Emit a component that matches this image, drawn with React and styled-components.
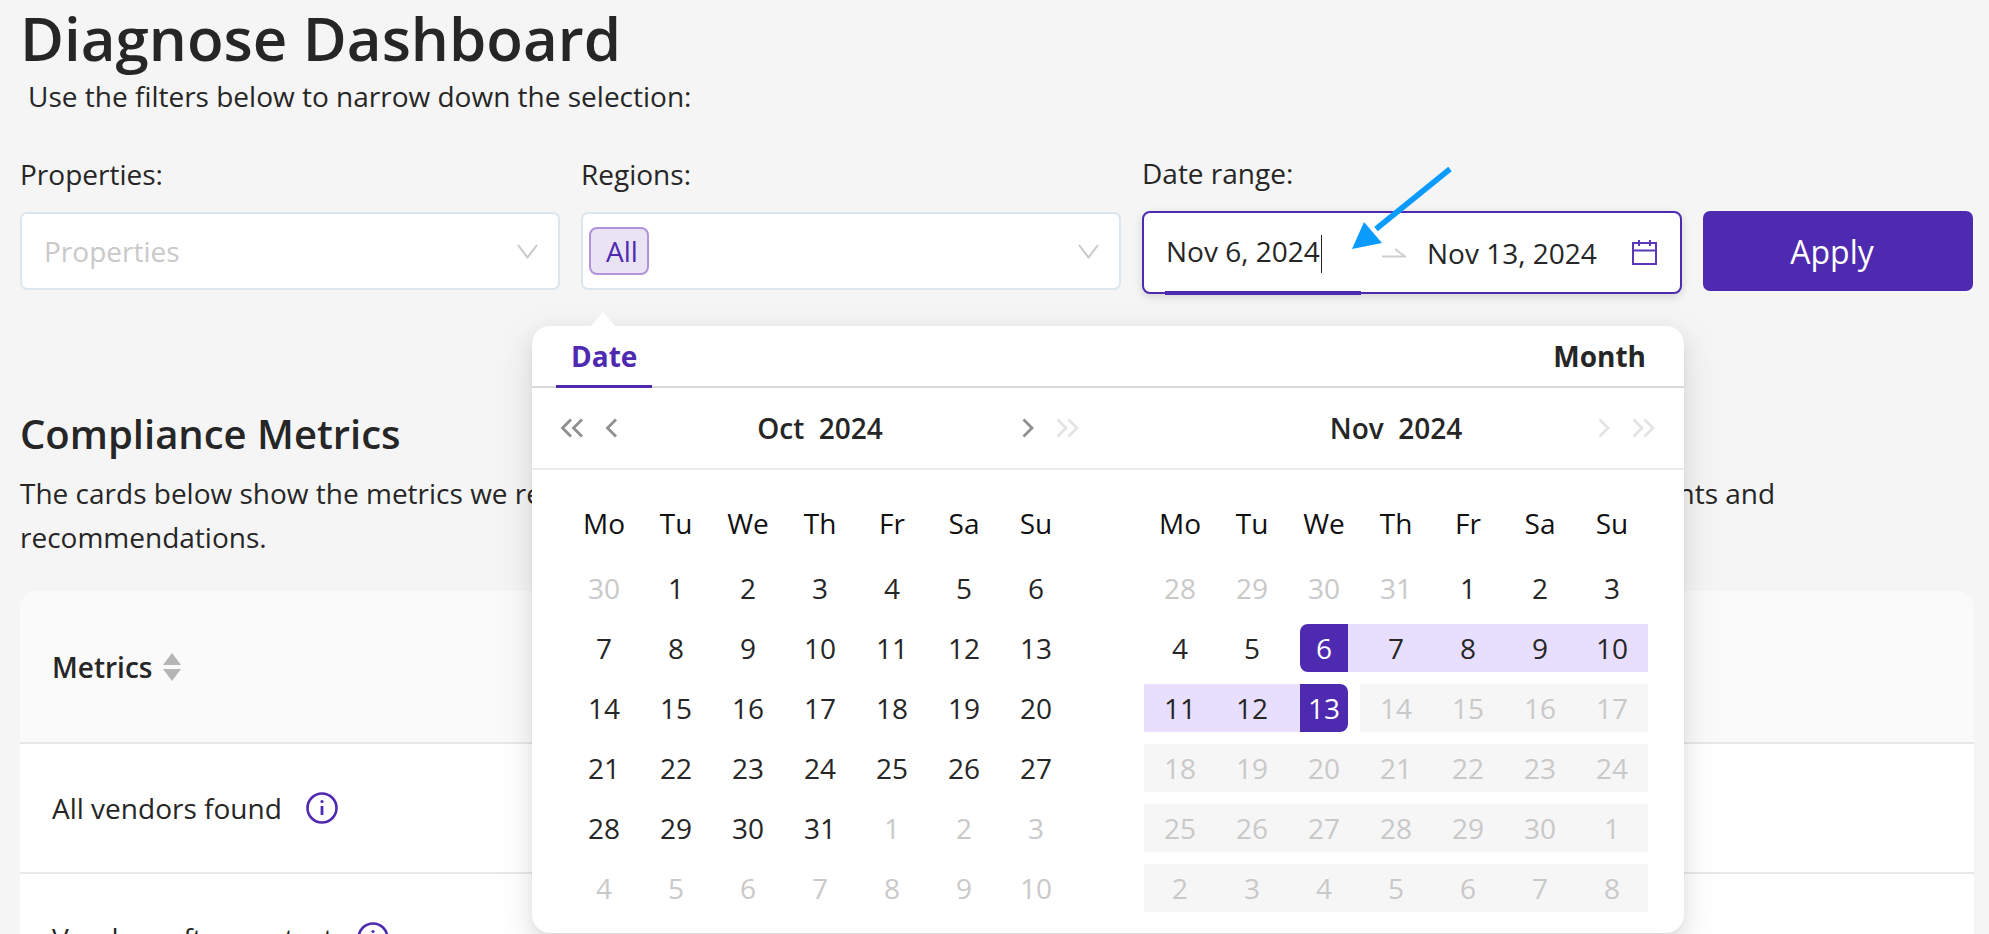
import React from 'react'
import styled, { createGlobalStyle } from 'styled-components'

const purple = '#4e2ab1'
const ink = '#262626'
const muted = '#c9c9c9'

const GlobalStyle = createGlobalStyle`
  html, body {
    margin: 0;
    height: 100%;
    overflow: hidden;
    background: #f5f5f5;
  }
  body {
    font-family: "Open Sans", "Noto Sans", sans-serif;
    color: ${ink};
  }
`

const Page = styled.div`
  position: relative;
  height: 934px;
  overflow: hidden;
  padding: 0 15px 0 20px;
  box-sizing: border-box;
`
const Title = styled.h1`
  margin: 0;
  font-size: 60px;
  line-height: 76px;
  font-weight: 600;
`
const Subtitle = styled.p`
  margin: 0 0 0 8px;
  font-size: 28px;
  line-height: 40px;
`
const Filters = styled.div`
  display: grid;
  grid-template-columns: 540px 540px 540px 270px;
  column-gap: 21px;
  margin-top: 39px;
  align-items: end;
`
const Field = styled.div`
  position: relative;
  display: flex;
  flex-direction: column;
`
const Label = styled.label`
  font-size: 28px;
  line-height: 36px;
  margin-bottom: 20px;
`
const SelectBox = styled.div`
  height: 78px;
  box-sizing: border-box;
  display: flex;
  align-items: center;
  justify-content: space-between;
  padding: 0 20px 0 6px;
  background: #fff;
  border: 2px solid #dbe6ee;
  border-radius: 7px;
  margin-bottom: 4px;
`
const Placeholder = styled.span`
  margin-left: 16px;
  font-size: 28px;
  color: ${muted};
`
const Tag = styled.span`
  height: 48px;
  width: 60px;
  box-sizing: border-box;
  display: flex;
  align-items: center;
  justify-content: center;
  padding-left: 6px;
  background: #e9e3f3;
  border: 2px solid #b093dc;
  border-radius: 8px;
  color: ${purple};
  font-size: 28px;
`
const DateBox = styled.div`
  position: relative;
  height: 83px;
  box-sizing: border-box;
  display: flex;
  align-items: center;
  padding: 0 23px 0 22px;
  background: #fff;
  border: 2.5px solid ${purple};
  border-radius: 8px;
  box-shadow: 0 3px 10px rgba(0, 0, 0, 0.14);
  font-size: 28px;
`
const DateValue = styled.span`
  width: ${p => p.$width}px;
  margin-left: ${p => p.$gap || 0}px;
  white-space: nowrap;
`
const Caret = styled.span`
  display: inline-block;
  width: 1.5px;
  height: 38px;
  margin-left: 1px;
  background: #222;
  vertical-align: middle;
`
const ActiveBar = styled.span`
  position: absolute;
  left: 21px;
  bottom: -2.5px;
  width: 196px;
  height: 4px;
  background: ${purple};
`
const ArrowMark = styled.svg`
  position: absolute;
  left: 202px;
  top: -51px;
  z-index: 5;
`
const ApplyButton = styled.button`
  height: 80px;
  margin-bottom: 3px;
  padding: 0 12px 0 0;
  border: 0;
  border-radius: 7px;
  background: ${purple};
  color: #fff;
  font-family: inherit;
  font-size: 32px;
`
const SectionTitle = styled.h2`
  margin: 114px 0 0;
  font-size: 40px;
  line-height: 52px;
  font-weight: 600;
`
const Intro = styled.p`
  margin: 11px 0 0;
  font-size: 28px;
  line-height: 44px;
  width: 1790px;
`
const TableCard = styled.div`
  margin-top: 32px;
  background: #fff;
  border-radius: 18px 18px 0 0;
  overflow: hidden;
`
const TableHead = styled.div`
  height: 153px;
  box-sizing: border-box;
  display: flex;
  align-items: center;
  gap: 11px;
  padding-left: 32px;
  background: #fafafa;
  font-size: 28px;
  font-weight: 600;
  border-bottom: 2px solid #e8e8e8;
`
const TableRow = styled.div`
  height: 130px;
  box-sizing: border-box;
  display: flex;
  align-items: center;
  gap: 24px;
  padding-left: 32px;
  font-size: 28px;
  border-bottom: 2px solid #e8e8e8;
`
const Popup = styled.div`
  position: absolute;
  left: 532px;
  top: 326px;
  z-index: 3;
  width: 1152px;
  height: 607px;
  background: #fff;
  border-radius: 18px;
  box-shadow: 0 8px 20px rgba(0, 0, 0, 0.08), 0 4px 8px -5px rgba(0, 0, 0, 0.12), 0 11px 36px 10px rgba(0, 0, 0, 0.05);
  &::before {
    content: '';
    position: absolute;
    left: 59px;
    top: -14px;
    border: 12px solid transparent;
    border-top: 0;
    border-bottom: 14px solid #fff;
  }
`
const Tabs = styled.div`
  height: 62px;
  box-sizing: border-box;
  display: flex;
  align-items: stretch;
  justify-content: space-between;
  padding: 0 38px 0 24px;
  border-bottom: 2px solid #d9d9d9;
`
const Tab = styled.div`
  position: relative;
  padding: 0 ${p => (p.$active ? 15 : 0)}px;
  display: flex;
  align-items: center;
  font-size: 28px;
  font-weight: 700;
  color: ${p => (p.$active ? purple : ink)};
  ${p => p.$active && `
    &::after {
      content: '';
      position: absolute;
      left: 0;
      right: 0;
      bottom: -2px;
      height: 3px;
      background: ${purple};
    }
  `}
`
const HeaderRow = styled.div`
  height: 82px;
  box-sizing: border-box;
  display: grid;
  grid-template-columns: 504px 504px;
  column-gap: 72px;
  padding: 0 36px;
  border-bottom: 2px solid #ececec;
`
const MonthHeader = styled.div`
  display: flex;
  align-items: center;
  justify-content: space-between;
  margin: 0 -8px;
`
const NavGroup = styled.div`
  display: flex;
  align-items: center;
  gap: 21px;
  visibility: ${p => (p.$hidden ? 'hidden' : 'visible')};
`
const MonthTitle = styled.div`
  font-size: 28px;
  font-weight: 600;
  white-space: pre;
`
const Calendars = styled.div`
  display: grid;
  grid-template-columns: 504px 504px;
  column-gap: 72px;
  padding: 29px 36px 0;
`
const Weekdays = styled.div`
  display: grid;
  grid-template-columns: repeat(7, 72px);
  height: 48px;
  margin-bottom: 17px;
`
const Weekday = styled.div`
  display: flex;
  align-items: center;
  justify-content: center;
  font-size: 28px;
  color: #111;
`
const DayGrid = styled.div`
  display: grid;
  grid-template-columns: repeat(7, 72px);
  grid-auto-rows: 48px;
  row-gap: 12px;
`
const dayBackground = {
  range: '#e7dffd',
  start: 'linear-gradient(to right, transparent 60px, #e7dffd 60px)',
  end: 'linear-gradient(to right, #e7dffd 12px, transparent 12px)',
  off: '#f6f6f6'
}
const Day = styled.div`
  display: flex;
  justify-content: center;
  background: ${p => dayBackground[p.$kind] || 'transparent'};
`
const DayNumber = styled.span`
  width: 48px;
  display: flex;
  align-items: center;
  justify-content: center;
  font-size: 28px;
  color: ${p => (p.$kind === 'start' || p.$kind === 'end' ? '#fff' : p.$kind === 'off' || p.$kind === 'out' ? muted : ink)};
  background: ${p => (p.$kind === 'start' || p.$kind === 'end' ? purple : 'transparent')};
  border-radius: ${p => (p.$kind === 'start' ? '8px 0 0 8px' : p.$kind === 'end' ? '0 8px 8px 0' : '0')};
`

const WEEKDAYS = ['Mo', 'Tu', 'We', 'Th', 'Fr', 'Sa', 'Su']

const range = (from, to, kind) => {
  const out = []
  for (let n = from; n <= to; n++) out.push([n, kind])
  return out
}

const OCT_DAYS = [
  [30, 'out'],
  ...range(1, 31),
  ...range(1, 10, 'out')
]

const NOV_DAYS = [
  ...range(28, 31, 'out'),
  ...range(1, 5),
  [6, 'start'],
  ...range(7, 12, 'range'),
  [13, 'end'],
  ...range(14, 30, 'off'),
  ...range(1, 8, 'off')
]

function Chevron ({ dir = 'left', double, faint }) {
  const color = faint ? '#e3e3e3' : '#8f8f8f'
  const points = dir === 'left' ? '11,1.5 2.5,10 11,18.5' : '1.5,1.5 10,10 1.5,18.5'
  const shifted = dir === 'left' ? '22,1.5 13.5,10 22,18.5' : '12.5,1.5 21,10 12.5,18.5'
  return (
    <svg width={double ? 24 : 13} height="20" viewBox={double ? '0 0 24 20' : '0 0 13 20'} fill="none" stroke={color} strokeWidth="2.8">
      <polyline points={points} />
      {double && <polyline points={shifted} />}
    </svg>
  )
}

function SelectArrow () {
  return (
    <svg width="21" height="15" viewBox="0 0 21 15" fill="none" stroke="#c8c8c8" strokeWidth="2">
      <polyline points="1,1 10.5,13.5 20,1" />
    </svg>
  )
}

function CalendarIcon () {
  return (
    <svg width="25" height="25" viewBox="0 0 25 25" fill="none" stroke="#5a38b8" strokeWidth="2">
      <rect x="1" y="3" width="23" height="21" />
      <path d="M1 10.5H24M7 0V6M18 0V6" />
    </svg>
  )
}

function SwapRight () {
  return (
    <svg width="24" height="10" viewBox="0 0 24 10" fill="none" stroke="#cfcfcf" strokeWidth="2" style={{ flexShrink: 0 }}>
      <path d="M0 8.5H23L13 1" />
    </svg>
  )
}

function SortIcon () {
  return (
    <svg width="18" height="28" viewBox="0 0 18 28" fill="#b5b5b5">
      <path d="M9 0L18 12H0Z" />
      <path d="M0 16H18L9 28Z" />
    </svg>
  )
}

function InfoIcon () {
  return (
    <svg width="32" height="32" viewBox="0 0 32 32" fill="none" stroke={purple} strokeWidth="2.6">
      <circle cx="16" cy="16" r="14.5" />
      <path d="M16 14V23" strokeWidth="2.8" />
      <circle cx="16" cy="9.5" r="1.6" fill={purple} stroke="none" />
    </svg>
  )
}

function Month ({ days }) {
  return (
    <div>
      <Weekdays>
        {WEEKDAYS.map(d => <Weekday key={d}>{d}</Weekday>)}
      </Weekdays>
      <DayGrid>
        {days.map(([n, kind], i) => (
          <Day key={i} $kind={kind}>
            <DayNumber $kind={kind}>{n}</DayNumber>
          </Day>
        ))}
      </DayGrid>
    </div>
  )
}

export default function App () {
  return (
    <Page>
      <GlobalStyle />
      <Title>Diagnose Dashboard</Title>
      <Subtitle>Use the filters below to narrow down the selection:</Subtitle>
      <Filters>
        <Field>
          <Label>Properties:</Label>
          <SelectBox>
            <Placeholder>Properties</Placeholder>
            <SelectArrow />
          </SelectBox>
        </Field>
        <Field>
          <Label>Regions:</Label>
          <SelectBox>
            <Tag>All</Tag>
            <SelectArrow />
          </SelectBox>
        </Field>
        <Field>
          <Label>Date range:</Label>
          <DateBox>
            <DateValue $width={216}>Nov 6, 2024<Caret /></DateValue>
            <SwapRight />
            <DateValue $width={205} $gap={21}>Nov 13, 2024</DateValue>
            <CalendarIcon />
            <ActiveBar />
            <ArrowMark width="110" height="95" viewBox="0 0 110 95">
              <path d="M104 7L30 67" stroke="#0a9bff" strokeWidth="5.5" fill="none" />
              <path d="M6 87L18 60L36 81Z" fill="#0a9bff" />
            </ArrowMark>
          </DateBox>
        </Field>
        <ApplyButton>Apply</ApplyButton>
      </Filters>
      <SectionTitle>Compliance Metrics</SectionTitle>
      <Intro>
        The cards below show the metrics we review for your compliance diagnosis. Select a card to see its detailed findings, requirements and recommendations.
      </Intro>
      <TableCard>
        <TableHead>Metrics <SortIcon /></TableHead>
        <TableRow>All vendors found <InfoIcon /></TableRow>
        <TableRow>Vendors after contact <InfoIcon /></TableRow>
      </TableCard>
      <Popup>
        <Tabs>
          <Tab $active>Date</Tab>
          <Tab>Month</Tab>
        </Tabs>
        <HeaderRow>
          <MonthHeader>
            <NavGroup><Chevron double /><Chevron /></NavGroup>
            <MonthTitle>Oct  2024</MonthTitle>
            <NavGroup><Chevron dir="right" /><Chevron dir="right" double faint /></NavGroup>
          </MonthHeader>
          <MonthHeader>
            <NavGroup $hidden><Chevron double /><Chevron /></NavGroup>
            <MonthTitle>Nov  2024</MonthTitle>
            <NavGroup><Chevron dir="right" faint /><Chevron dir="right" double faint /></NavGroup>
          </MonthHeader>
        </HeaderRow>
        <Calendars>
          <Month days={OCT_DAYS} />
          <Month days={NOV_DAYS} />
        </Calendars>
      </Popup>
    </Page>
  )
}
